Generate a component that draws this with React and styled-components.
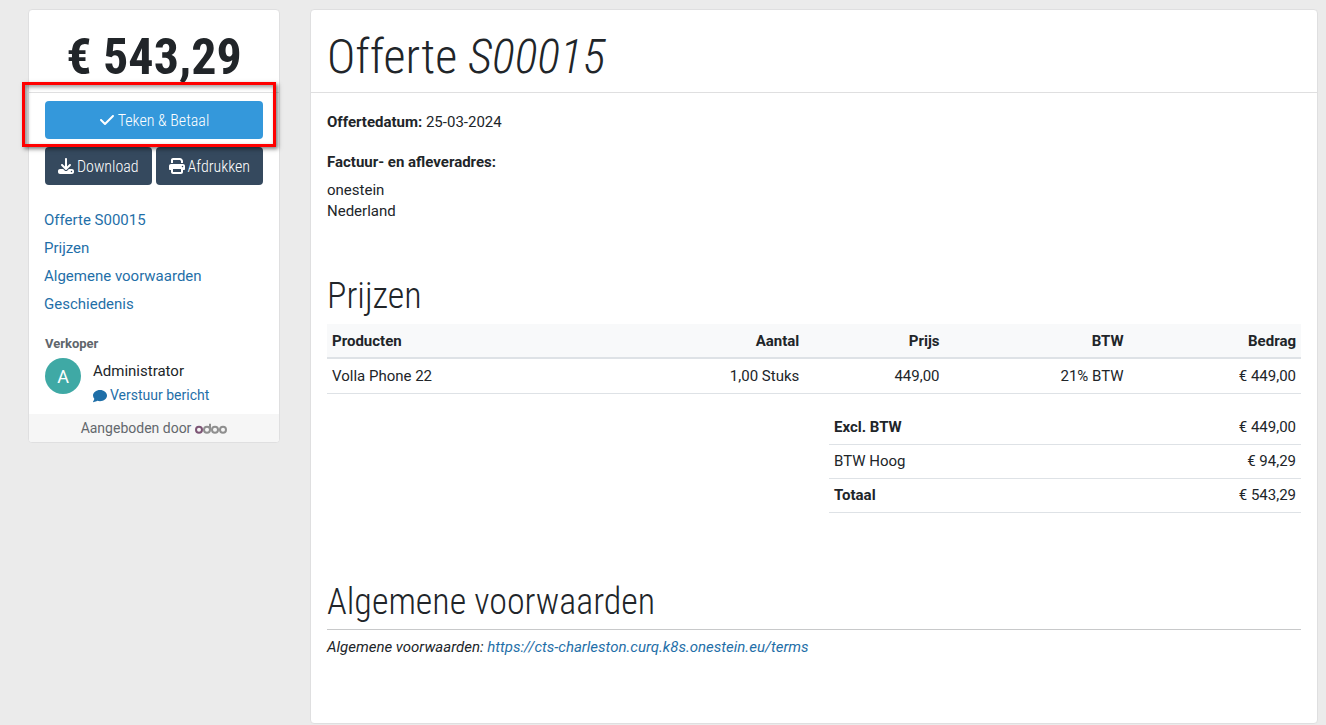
import React from 'react';
import styled, { createGlobalStyle } from 'styled-components';
import { FaCheck, FaDownload, FaPrint, FaComment } from 'react-icons/fa6';

const GlobalStyle = createGlobalStyle`
    *{ box-sizing:border-box; }
    body{
        margin:0;
        background:#ebebeb;
        color:#212529;
        font-family:Roboto, "Liberation Sans", sans-serif;
        font-size:15px;
        line-height:21px;
    }
    a{
        color:#1f6fa8;
        text-decoration:none;
    }
`

const Page = styled.div`
    display:flex;
    align-items:flex-start;
    gap:30px;
    padding:9px 8px 2px 28px;
`

const Card = styled.div`
    background:#fff;
    border:1px solid #dfdfe0;
    border-radius:4px;
`

const Sidebar = styled(Card)`
    flex:0 0 252px;
`

const Main = styled(Card)`
    flex:1;
    min-width:0;
    padding-bottom:65px;
`

const Header = styled.div`
    display:flex;
    align-items:center;
    height:83px;
    padding:12px 16px 0;
    justify-content:${props => props.$center ? 'center' : 'flex-start'};
    border-bottom:1px solid #dfdfe0;
`

const Title = styled.h1`
    margin:0;
    font-family:"Roboto Condensed", "Liberation Sans", sans-serif;
    font-size:${props => props.$bold ? 50 : 48}px;
    line-height:56px;
    font-weight:${props => props.$bold ? 700 : 300};
    white-space:nowrap;
`

const Actions = styled.div`
    display:flex;
    flex-wrap:wrap;
    gap:8px 4px;
    padding:8px 16px 0;
`

const Highlight = styled.div`
    position:relative;
    flex:0 0 100%;
    display:flex;
    &::after{
        content:'';
        position:absolute;
        z-index:1;
        top:-19px;
        right:-13px;
        bottom:-8px;
        left:-23px;
        border:3px solid #f00;
        box-shadow:2px 2px 4px rgba(0,0,0,.5), inset 2px 2px 4px rgba(0,0,0,.4);
        pointer-events:none;
    }
`

const Button = styled.button`
    flex:1 1 auto;
    display:flex;
    align-items:center;
    justify-content:center;
    gap:3px;
    height:38px;
    padding:0 12px;
    border:0;
    border-radius:4px;
    background:${props => props.$primary ? '#3498db' : '#35495e'};
    color:#fff;
    font-family:"Roboto Condensed", "Liberation Sans", sans-serif;
    font-size:16px;
    font-weight:300;
    white-space:nowrap;
    cursor:pointer;
`

const Menu = styled.nav`
    display:flex;
    flex-direction:column;
    align-items:flex-start;
    gap:7px;
    padding:25px 15px 0;
`

const Seller = styled.section`
    padding:18px 16px 8px;
    h6{
        margin:0;
        color:#5f666c;
        font-size:13px;
        line-height:22px;
        font-weight:700;
    }
`

const Contact = styled.div`
    display:flex;
    align-items:flex-start;
    gap:12px;
    padding-top:3px;
`

const Avatar = styled.div`
    flex:0 0 36px;
    height:36px;
    border-radius:50%;
    background:#3fa9a5;
    color:#fff;
    font-size:18px;
    line-height:37px;
    text-align:center;
`

const Person = styled.div`
    padding-top:3px;
    a{
        display:flex;
        align-items:center;
        gap:3px;
        padding-top:3px;
        font-size:14px;
    }
`

const Powered = styled.div`
    display:flex;
    align-items:center;
    justify-content:center;
    gap:4px;
    height:28px;
    border-radius:0 0 3px 3px;
    background:#f6f6f6;
    color:#63686d;
    font-size:14px;
`

const Content = styled.div`
    padding:19px 16px 0;
    p{
        margin:0;
    }
`

const Address = styled.address`
    padding:19px 0 52px;
    font-style:normal;
    strong{
        display:block;
        padding-bottom:7px;
    }
`

const SectionTitle = styled.h2`
    margin:0;
    font-family:"Roboto Condensed", "Liberation Sans", sans-serif;
    font-size:36px;
    line-height:44px;
    font-weight:300;
`

const Table = styled.table`
    width:100%;
    margin-top:6px;
    border-collapse:collapse;
    table-layout:fixed;
    th, td{
        padding:7px 5px 6px;
        text-align:right;
        border-bottom:1px solid #dee2e6;
    }
    th:first-child, td:first-child{
        text-align:left;
    }
    thead th{
        background:#f8f9fa;
        border-bottom:2px solid #dee2e6;
        padding-bottom:5px;
    }
`

const Col = styled.col`
    width:${props => props.$width};
`

const Totals = styled(Table)`
    width:calc(50% - 15px);
    margin:17px 0 0 auto;
    table-layout:auto;
    th, td{
        padding:6px 5px;
    }
`

const TotalLabel = styled.th`
    font-weight:${props => props.$plain ? 400 : 700};
`

const Terms = styled.section`
    padding-top:67px;
    hr{
        margin:5px 0 7px;
        border:0;
        border-top:1px solid #c8c9ca;
    }
    p{
        font-style:italic;
    }
`

const OdooLogo = () => (
    <svg width="32" height="12" viewBox="0 0 32 12" fill="none" strokeWidth="2" role="img" aria-label="odoo">
        <circle cx="4" cy="7.8" r="3" stroke="#7d5575" />
        <circle cx="12" cy="7.8" r="3" stroke="#8f8f8f" />
        <path d="M15 1.8V7.8" stroke="#8f8f8f" />
        <circle cx="20" cy="7.8" r="3" stroke="#8f8f8f" />
        <circle cx="28" cy="7.8" r="3" stroke="#8f8f8f" />
    </svg>
)

const menu = [
    { id: 'offerte', label: 'Offerte S00015' },
    { id: 'prijzen', label: 'Prijzen' },
    { id: 'voorwaarden', label: 'Algemene voorwaarden' },
    { id: 'geschiedenis', label: 'Geschiedenis' },
]

const totals = [
    { label: 'Excl. BTW', amount: '€ 449,00' },
    { label: 'BTW Hoog', amount: '€ 94,29', plain: true },
    { label: 'Totaal', amount: '€ 543,29' },
]

const App = () => {
    return (
        <>
            <GlobalStyle />
            <Page>
                <Sidebar as="aside">
                    <Header $center>
                        <Title as="h2" $bold>€ 543,29</Title>
                    </Header>
                    <Actions>
                        <Highlight>
                            <Button type="button" $primary><FaCheck />Teken &amp; Betaal</Button>
                        </Highlight>
                        <Button type="button"><FaDownload />Download</Button>
                        <Button type="button"><FaPrint />Afdrukken</Button>
                    </Actions>
                    <Menu>
                        {menu.map(item => <a key={item.id} href={`#${item.id}`}>{item.label}</a>)}
                    </Menu>
                    <Seller>
                        <h6>Verkoper</h6>
                        <Contact>
                            <Avatar>A</Avatar>
                            <Person>
                                Administrator
                                <a href="#geschiedenis"><FaComment />Verstuur bericht</a>
                            </Person>
                        </Contact>
                    </Seller>
                    <Powered>Aangeboden door <OdooLogo /></Powered>
                </Sidebar>
                <Main as="main">
                    <Header id="offerte">
                        <Title>Offerte <em>S00015</em></Title>
                    </Header>
                    <Content>
                        <p><strong>Offertedatum:</strong> 25-03-2024</p>
                        <Address>
                            <strong>Factuur- en afleveradres:</strong>
                            onestein<br />
                            Nederland
                        </Address>
                        <section id="prijzen">
                            <SectionTitle>Prijzen</SectionTitle>
                            <Table>
                                <colgroup>
                                    <Col $width="34%" />
                                    <Col $width="15%" />
                                    <Col $width="14.4%" />
                                    <Col $width="18.9%" />
                                    <Col />
                                </colgroup>
                                <thead>
                                    <tr>
                                        <th>Producten</th>
                                        <th>Aantal</th>
                                        <th>Prijs</th>
                                        <th>BTW</th>
                                        <th>Bedrag</th>
                                    </tr>
                                </thead>
                                <tbody>
                                    <tr>
                                        <td>Volla Phone 22</td>
                                        <td>1,00 Stuks</td>
                                        <td>449,00</td>
                                        <td>21% BTW</td>
                                        <td>€ 449,00</td>
                                    </tr>
                                </tbody>
                            </Table>
                            <Totals>
                                <tbody>
                                    {totals.map(row => (
                                        <tr key={row.label}>
                                            <TotalLabel scope="row" $plain={row.plain}>{row.label}</TotalLabel>
                                            <td>{row.amount}</td>
                                        </tr>
                                    ))}
                                </tbody>
                            </Totals>
                        </section>
                        <Terms id="voorwaarden">
                            <SectionTitle>Algemene voorwaarden</SectionTitle>
                            <hr />
                            <p>Algemene voorwaarden: <a href="https://cts-charleston.curq.k8s.onestein.eu/terms">https://cts-charleston.curq.k8s.onestein.eu/terms</a></p>
                        </Terms>
                    </Content>
                </Main>
            </Page>
        </>
    )
}

export default App
